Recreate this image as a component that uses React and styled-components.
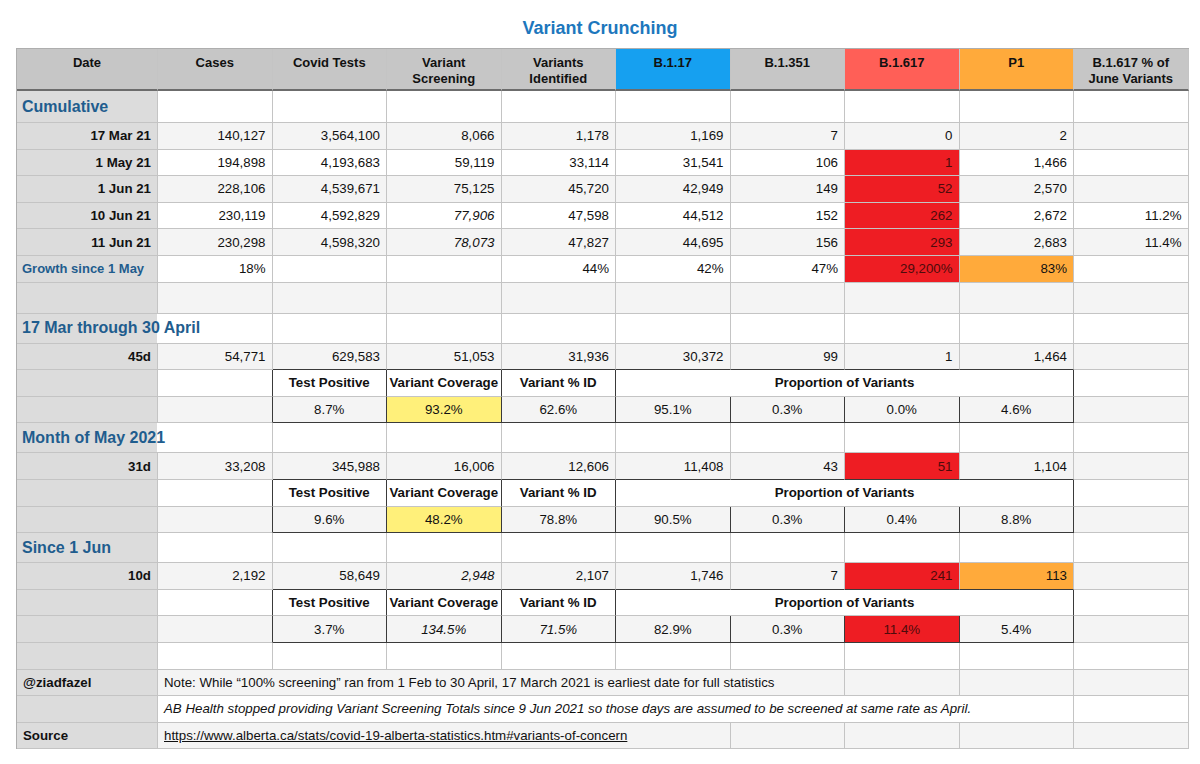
import React from 'react'
import styled, { createGlobalStyle } from 'styled-components'

const GlobalStyle = createGlobalStyle`
  html, body {
    margin: 0;
    padding: 0;
    background: #fff;
  }
  body {
    font-family: "Liberation Sans", Arial, Helvetica, sans-serif;
    color: #111;
  }
`

const LINE = '#c4c4c4'
const DARK = '#3a3a3a'
const LABEL_BG = '#dcdcdc'
const STRIPE = ['#ffffff', '#f4f4f4']
const TONES = {
  red: '#ee1d23',
  orange: '#ffaa3b',
  yellow: '#fff07a',
}
const HEAD_TONES = {
  gray: '#c6c6c6',
  blue: '#16a0f0',
  salmon: '#ff5f57',
  orange: '#ffaa3b',
}

const headers = [
  { lines: ['Date'], tone: 'gray' },
  { lines: ['Cases'], tone: 'gray' },
  { lines: ['Covid Tests'], tone: 'gray' },
  { lines: ['Variant', 'Screening'], tone: 'gray' },
  { lines: ['Variants', 'Identified'], tone: 'gray' },
  { lines: ['B.1.17'], tone: 'blue' },
  { lines: ['B.1.351'], tone: 'gray' },
  { lines: ['B.1.617'], tone: 'salmon' },
  { lines: ['P1'], tone: 'orange' },
  { lines: ['B.1.617 % of', 'June Variants'], tone: 'gray' },
]

const ROW = 26.6
const blank = n => Array.from({ length: n }, () => ({ t: '' }))
const red = t => ({ t, tone: 'red', align: 'right' })
const orange = t => ({ t, tone: 'orange', align: 'right' })
const it = t => ({ t, italic: true, align: 'right' })

function dataRow(label, vals) {
  return {
    h: ROW,
    cells: [
      { t: label, kind: 'label' },
      ...vals.map(v => (typeof v === 'string' ? { t: v, align: 'right' } : v)),
    ],
  }
}

// row right above a boxed block: dark bottom over columns 2..8
function aboveBox(row) {
  row.cells = row.cells.map((c, i) => (i >= 2 && i <= 8 ? { ...c, db: true } : c))
  return row
}

function block(vals) {
  const head = {
    h: ROW,
    cells: [
      { t: '', kind: 'label' },
      { t: '', dr: true },
      { t: 'Test Positive', strong: true, align: 'center', dr: true },
      { t: 'Variant Coverage', strong: true, align: 'center', dr: true },
      { t: 'Variant % ID', strong: true, align: 'center', dr: true },
      { t: 'Proportion of Variants', strong: true, align: 'center', span: 4, dr: true },
      { t: '' },
    ],
  }
  const values = {
    h: ROW,
    cells: [
      { t: '', kind: 'label' },
      { t: '', dr: true },
      ...vals.map(v => ({ align: 'center', dr: true, db: true, ...(typeof v === 'string' ? { t: v } : v) })),
      { t: '' },
    ],
  }
  return [head, values]
}

const emptyRow = h => ({ h, cells: [{ t: '', kind: 'label' }, ...blank(9)] })
const sectionRow = (t, span, h = 30) => ({
  h,
  cells: [{ t, kind: 'section', span }, ...blank(10 - span)],
})

const rows = [
  sectionRow('Cumulative', 1, 32),
  dataRow('17 Mar 21', ['140,127', '3,564,100', '8,066', '1,178', '1,169', '7', '0', '2', '']),
  dataRow('1 May 21', ['194,898', '4,193,683', '59,119', '33,114', '31,541', '106', red('1'), '1,466', '']),
  dataRow('1 Jun 21', ['228,106', '4,539,671', '75,125', '45,720', '42,949', '149', red('52'), '2,570', '']),
  dataRow('10 Jun 21', ['230,119', '4,592,829', it('77,906'), '47,598', '44,512', '152', red('262'), '2,672', '11.2%']),
  dataRow('11 Jun 21', ['230,298', '4,598,320', it('78,073'), '47,827', '44,695', '156', red('293'), '2,683', '11.4%']),
  {
    h: ROW,
    cells: [
      { t: 'Growth since 1 May', kind: 'growth' },
      ...['18%', '', '', '44%', '42%', '47%'].map(t => ({ t, align: 'right' })),
      red('29,200%'),
      orange('83%'),
      { t: '' },
    ],
  },
  emptyRow(31),
  sectionRow('17 Mar through 30 April', 2),
  aboveBox(dataRow('45d', ['54,771', '629,583', '51,053', '31,936', '30,372', '99', '1', '1,464', ''])),
  ...block(['8.7%', { t: '93.2%', tone: 'yellow' }, '62.6%', '95.1%', '0.3%', '0.0%', '4.6%']),
  sectionRow('Month of May 2021', 2),
  aboveBox(dataRow('31d', ['33,208', '345,988', '16,006', '12,606', '11,408', '43', red('51'), '1,104', ''])),
  ...block(['9.6%', { t: '48.2%', tone: 'yellow' }, '78.8%', '90.5%', '0.3%', '0.4%', '8.8%']),
  sectionRow('Since 1 Jun', 1),
  aboveBox(dataRow('10d', ['2,192', '58,649', it('2,948'), '2,107', '1,746', '7', red('241'), orange('113'), ''])),
  ...block([
    '3.7%',
    { t: '134.5%', italic: true },
    { t: '71.5%', italic: true },
    '82.9%',
    '0.3%',
    { t: '11.4%', tone: 'red' },
    '5.4%',
  ]),
  emptyRow(ROW),
  {
    h: ROW,
    cells: [
      { t: '@ziadfazel', kind: 'note' },
      {
        t: 'Note: While \u201c100% screening\u201d ran from 1 Feb to 30 April, 17 March 2021 is earliest date for full statistics',
        span: 6,
        align: 'left',
      },
      ...blank(3),
    ],
  },
  {
    h: ROW,
    cells: [
      { t: '', kind: 'label' },
      {
        t: 'AB Health stopped providing Variant Screening Totals since 9 Jun 2021 so those days are assumed to be screened at same rate as April.',
        span: 8,
        align: 'left',
        italic: true,
      },
      { t: '' },
    ],
  },
  {
    h: ROW,
    cells: [
      { t: 'Source', kind: 'note' },
      {
        t: 'https://www.alberta.ca/stats/covid-19-alberta-statistics.htm#variants-of-concern',
        span: 5,
        align: 'left',
        link: true,
      },
      ...blank(4),
    ],
  },
]

const justify = { left: 'flex-start', right: 'flex-end', center: 'center' }

const Page = styled.div`
  width: 1200px;
`

const Title = styled.h1`
  margin: 0;
  height: 48px;
  padding-top: 18px;
  box-sizing: border-box;
  text-align: center;
  font-size: 18px;
  line-height: 20px;
  font-weight: bold;
  color: #1d77bd;
`

const Sheet = styled.div`
  display: grid;
  grid-template-columns: 141px repeat(9, 114.5px);
  grid-template-rows: ${p => p.$rows};
  width: max-content;
  margin-left: 16px;
  border-top: 1px solid #aeaeae;
  border-left: 1px solid #aeaeae;
`

const HeadCell = styled.div`
  box-sizing: border-box;
  padding: 6px 4px 0;
  background: ${p => HEAD_TONES[p.$tone]};
  border-right: 1px solid ${LINE};
  border-bottom: 2px solid #6c6c6c;
  text-align: center;
  font-size: 13px;
  line-height: 16px;
  font-weight: bold;
  color: #111;
`

const Cell = styled.div`
  box-sizing: border-box;
  grid-column: span ${p => p.$span || 1};
  display: flex;
  align-items: center;
  justify-content: ${p => justify[p.$align || 'right']};
  padding: 0 ${p => (p.$align === 'center' ? 3 : 6)}px;
  min-width: 0;
  white-space: nowrap;
  overflow: hidden;
  font-size: 13.3px;
  font-style: ${p => (p.$italic ? 'italic' : 'normal')};
  font-weight: ${p => (p.$strong ? 'bold' : 'normal')};
  color: ${p => (p.$tone === 'red' ? '#4d0b0b' : '#111')};
  background: ${p => (p.$tone ? TONES[p.$tone] : p.$bg)};
  border-right: 1px solid ${p => (p.$dr ? DARK : LINE)};
  border-bottom: 1px solid ${p => (p.$db ? DARK : LINE)};
`

const LabelCell = styled(Cell)`
  justify-content: flex-end;
  background: ${LABEL_BG};
  font-weight: bold;
`

const NoteCell = styled(Cell)`
  justify-content: flex-start;
  background: ${LABEL_BG};
  font-weight: bold;
`

const GrowthCell = styled(Cell)`
  justify-content: flex-start;
  padding-left: 5px;
  background: ${LABEL_BG};
  font-size: 13px;
  font-weight: bold;
  color: #1f5d8e;
`

const SectionCell = styled(Cell)`
  justify-content: flex-start;
  padding-left: 5px;
  background: ${p =>
    p.$span > 1 ? `linear-gradient(to right, ${LABEL_BG} 140px, ${p.$bg} 140px)` : LABEL_BG};
  font-size: 16px;
  font-weight: bold;
  color: #1f5d8e;
`

const SourceLink = styled.a`
  color: #111;
  text-decoration: underline;
`

const kinds = {
  label: LabelCell,
  note: NoteCell,
  growth: GrowthCell,
  section: SectionCell,
}

export default function App() {
  const template = ['42px', ...rows.map(r => `${r.h}px`)].join(' ')
  return (
    <Page>
      <GlobalStyle />
      <Title>Variant Crunching</Title>
      <Sheet $rows={template}>
        {headers.map((h, i) => (
          <HeadCell key={`h${i}`} $tone={h.tone}>
            {h.lines.map((l, j) => (
              <div key={j}>{l}</div>
            ))}
          </HeadCell>
        ))}
        {rows.map((row, r) =>
          row.cells.map((c, i) => {
            const Comp = kinds[c.kind] || Cell
            return (
              <Comp
                key={`${r}-${i}`}
                $span={c.span}
                $align={c.align}
                $italic={c.italic}
                $strong={c.strong}
                $tone={c.tone}
                $bg={STRIPE[r % 2]}
                $dr={c.dr}
                $db={c.db}
              >
                {c.link ? <SourceLink href="#">{c.t}</SourceLink> : c.t}
              </Comp>
            )
          })
        )}
      </Sheet>
    </Page>
  )
}
